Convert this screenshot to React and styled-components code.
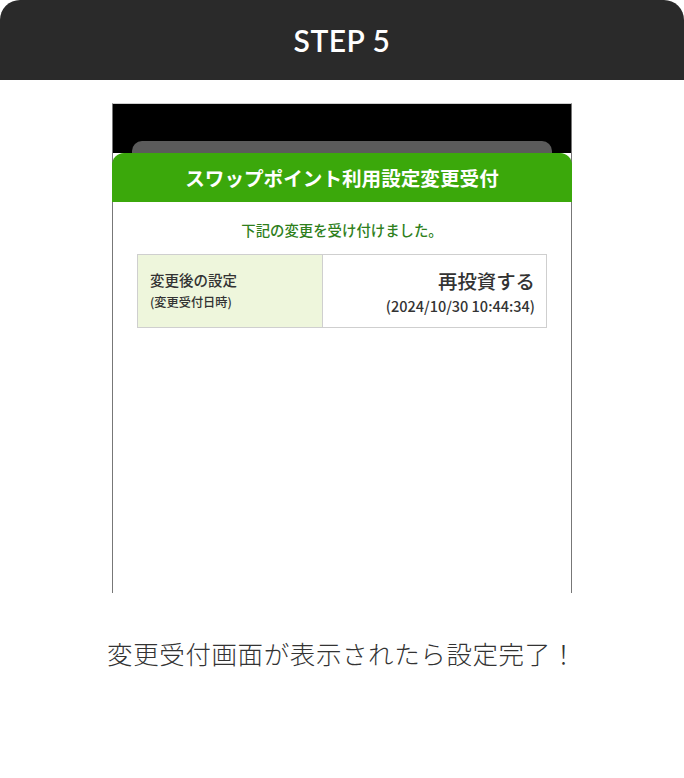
import React from "react";
import styled, { createGlobalStyle } from "styled-components";

const GlobalStyle = createGlobalStyle`
  body {
    margin: 0;
    background: #fff;
    font-family: "Noto Sans CJK JP", "Noto Sans", sans-serif;
    color: #333;
  }
`;

const Page = styled.div`
  width: 684px;
  height: 778px;
  background: #fff;
`;

const StepHeader = styled.header`
  height: 80px;
  background: #2a2a2a;
  border-radius: 20px 20px 0 0;
  display: flex;
  align-items: center;
  justify-content: center;
  color: #fff;
  font-family: "Lato", "Noto Sans", sans-serif;
  font-weight: 600;
  font-size: 30px;
  letter-spacing: 0.5px;
`;

const Body = styled.section`
  display: flex;
  flex-direction: column;
  align-items: center;
  padding-top: 23px;
`;

// phone screenshot frame
const Phone = styled.div`
  width: 458px;
  height: 489px;
  border-top: 1px solid #cfcfcf;
  border-left: 1px solid #777;
  border-right: 1px solid #777;
  display: flex;
  flex-direction: column;
  background: #fff;
`;

const StatusArea = styled.div`
  background: #000;
  padding-top: 37px;
`;

const SheetBehind = styled.div`
  margin: 0 19px;
  height: 12px;
  background: #5b5b5b;
  border-radius: 10px 10px 0 0;
`;

const SheetTitle = styled.div`
  height: 49px;
  background: #3ba80b;
  border-radius: 12px 12px 0 0;
  display: flex;
  align-items: center;
  justify-content: center;
  color: #fff;
  font-size: 19.6px;
  font-weight: 700;
  margin-left: -1px;
  margin-right: -1px;
`;

const Message = styled.p`
  margin: 18px 0 0;
  text-align: center;
  color: #2f7f1c;
  font-size: 14.4px;
  font-weight: 500;
  line-height: 20px;
`;

const Table = styled.div`
  margin: 14px 24px 0;
  display: grid;
  grid-template-columns: 185px 1fr;
  height: 72px;
  border: 1px solid #cfcfcf;
`;

const LabelCell = styled.div`
  background: #eef6dc;
  border-right: 1px solid #cfcfcf;
  padding: 13px 12px 0;
  display: flex;
  flex-direction: column;
`;

const ValueCell = styled.div`
  padding: 11px 11px 0;
  display: flex;
  flex-direction: column;
  align-items: flex-end;
`;

const Text = styled.span`
  font-size: ${(p) => p.$size}px;
  line-height: ${(p) => p.$line}px;
  font-weight: ${(p) => p.$weight || 400};
  color: #333;
`;

const Caption = styled.p`
  margin: 40px 0 0;
  font-size: 25.5px;
  font-weight: 300;
  line-height: 40px;
  color: #333;
  letter-spacing: 0.6px;
`;

export default function App() {
  return (
    <Page>
      <GlobalStyle />
      <StepHeader>STEP 5</StepHeader>
      <Body>
        <Phone>
          <StatusArea>
            <SheetBehind />
          </StatusArea>
          <SheetTitle>スワップポイント利用設定変更受付</SheetTitle>
          <Message>下記の変更を受け付けました。</Message>
          <Table>
            <LabelCell>
              <Text $size={14.5} $line={23} $weight={500}>
                変更後の設定
              </Text>
              <Text $size={12.2} $line={22} $weight={500}>
                (変更受付日時)
              </Text>
            </LabelCell>
            <ValueCell>
              <Text $size={19.4} $line={29} $weight={500}>
                再投資する
              </Text>
              <Text $size={14.5} $line={21} $weight={500}>
                (2024/10/30 10:44:34)
              </Text>
            </ValueCell>
          </Table>
        </Phone>
        <Caption>変更受付画面が表示されたら設定完了！</Caption>
      </Body>
    </Page>
  );
}
